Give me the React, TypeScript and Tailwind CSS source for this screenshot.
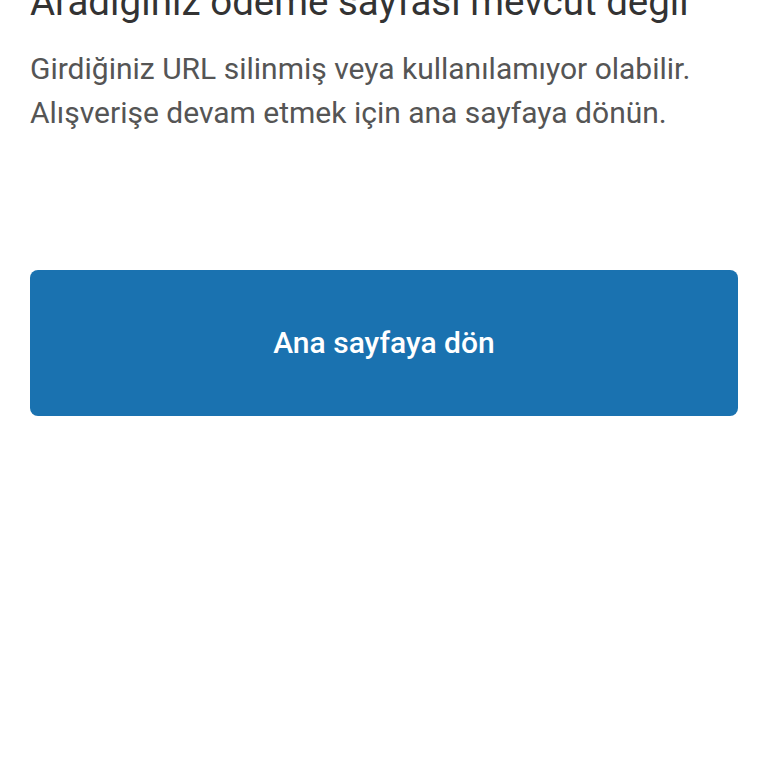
export default function App() {
  return (
    <main
      className="min-h-[768px] bg-white px-[30px] overflow-hidden"
      style={{ fontFamily: "Roboto, 'Noto Sans', sans-serif" }}
    >
      <h1 className="mt-[-18px] text-[38.5px] leading-[40px] font-normal text-[#333333] whitespace-nowrap">
        Aradığınız ödeme sayfası mevcut değil
      </h1>
      <p className="mt-[25px] text-[30px] leading-[44px] text-[#555555]">
        Girdiğiniz URL silinmiş veya kullanılamıyor olabilir.
        <br />
        Alışverişe devam etmek için ana sayfaya dönün.
      </p>
      <button className="mt-[135px] flex h-[146px] w-full items-center justify-center rounded-lg bg-[#1a72b0] pb-[2px] text-[30px] font-medium text-white">
        Ana sayfaya dön
      </button>
    </main>
  );
}
